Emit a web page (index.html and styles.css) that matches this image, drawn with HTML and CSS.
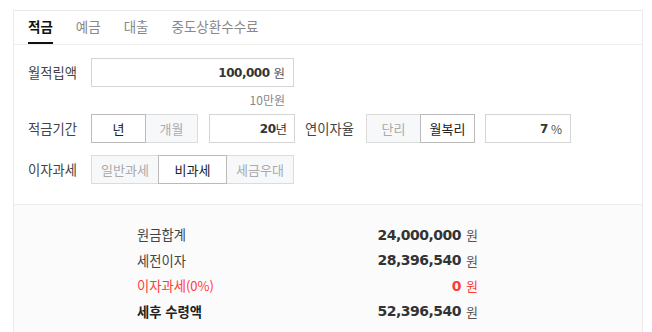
FILE: index.html
```html
<!DOCTYPE html>
<html lang="ko">
<head>
<meta charset="utf-8">
<link rel="stylesheet" href="styles.css">
</head>
<body>
<div class="card">
  <div class="tabs">
    <span class="tab active">적금</span>
    <span class="tab">예금</span>
    <span class="tab">대출</span>
    <span class="tab">중도상환수수료</span>
  </div>
  <div class="form">
    <div class="row">
      <span class="label">월적립액</span>
      <div class="input wide"><span class="num">100,000</span><span class="unit">원</span></div>
    </div>
    <div class="hint">10만원</div>
    <div class="row r2">
      <span class="label">적금기간</span>
      <div class="toggle">
        <span class="opt sel w54">년</span>
        <span class="opt w53">개월</span>
      </div>
      <div class="input mid"><span class="num">20</span><span class="unit tight">년</span></div>
      <span class="label label2">연이자율</span>
      <div class="toggle">
        <span class="opt w54">단리</span>
        <span class="opt sel w54">월복리</span>
      </div>
      <div class="input mid2"><span class="num">7</span><span class="unit pct">%</span></div>
    </div>
    <div class="row r3">
      <span class="label">이자과세</span>
      <div class="toggle">
        <span class="opt w68">일반과세</span>
        <span class="opt sel w69">비과세</span>
        <span class="opt w68">세금우대</span>
      </div>
    </div>
  </div>
  <div class="result">
    <div class="res-row"><span class="rlabel">원금합계</span><span class="rval">24,000,000</span><span class="runit">원</span></div>
    <div class="res-row"><span class="rlabel">세전이자</span><span class="rval">28,396,540</span><span class="runit">원</span></div>
    <div class="res-row red"><span class="rlabel">이자과세<span class="paren">(0%)</span></span><span class="rval">0</span><span class="runit">원</span></div>
    <div class="res-row total"><span class="rlabel">세후 수령액</span><span class="rval">52,396,540</span><span class="runit">원</span></div>
  </div>
</div>
</body>
</html>
```

FILE: styles.css
```css
* { box-sizing: border-box; }
html, body { margin: 0; padding: 0; background: #fff; }
body {
  font-family: "Noto Sans CJK KR", "Noto Sans", sans-serif;
  font-size: 13px;
  color: #333;
}
.card {
  margin: 10px 0 0 13px;
  width: 630px;
  height: 322px;
  border: 1px solid #ebebeb;
  border-bottom: none;
  background: #fff;
  display: flex;
  flex-direction: column;
}
.tabs {
  display: flex;
  gap: 23px;
  padding-left: 14px;
  height: 34px;
  flex: none;
  border-bottom: 1px solid #eee;
}
.tab {
  height: 33px;
  display: flex;
  align-items: center;
  font-size: 13.5px;
  color: #888;
  border-bottom: 2px solid transparent;
  line-height: 1;
}
.tab.active {
  color: #111;
  font-weight: bold;
  border-bottom-color: #111;
}
.form {
  flex: none;
  padding: 13px 0 20px 14px;
}
.row {
  display: flex;
  align-items: center;
  height: 29px;
}
.label {
  width: 63px;
  flex: none;
  color: #444;
  font-size: 13.3px;
}
.label2 { width: 61px; margin-left: 10px; }
.input {
  height: 29px;
  border: 1px solid #d5d5d5;
  background: #fff;
  display: flex;
  align-items: center;
  justify-content: flex-end;
  padding-right: 8px;
}
.wide { width: 203px; }
.mid { width: 86px; margin-left: 11px; padding-right: 7px; }
.mid2 { width: 86px; margin-left: 10px; padding-right: 8px; }
.num {
  font-family: "DejaVu Sans", sans-serif;
  font-weight: bold;
  font-size: 12px;
  letter-spacing: -0.5px;
  color: #333;
}
.unit {
  margin-left: 4px;
  font-size: 12.5px;
  color: #555;
}
.unit.tight { margin-left: 0; color: #333; }
.unit.pct { margin-left: 3px; font-size: 12px; }
.hint {
  text-align: right;
  width: 257px;
  font-size: 12px;
  color: #888;
  height: 27px;
  line-height: 26px;
}
.r3 { margin-top: 12px; }
.toggle { display: flex; }
.opt {
  height: 29px;
  display: flex;
  align-items: center;
  justify-content: center;
  border: 1px solid #dcdcdc;
  background: #f7f8fa;
  color: #aaa;
  margin-left: -1px;
  position: relative;
}
.opt:first-child { margin-left: 0; }
.opt.sel {
  background: #fff;
  border-color: #bbb;
  color: #222;
  z-index: 1;
}
.w54 { width: 55px; }
.w53 { width: 53px; }
.w68 { width: 68px; }
.w69 { width: 69px; }
.result {
  flex: 1;
  background: #fbfbfb;
  border-top: 1px solid #eee;
  padding: 17px 0 0 123px;
}
.res-row {
  display: flex;
  align-items: center;
  height: 25.5px;
  width: 341px;
}
.rlabel {
  flex: 1;
  color: #444;
  font-size: 13.3px;
}
.rval {
  font-family: "DejaVu Sans", sans-serif;
  font-weight: bold;
  font-size: 14px;
  letter-spacing: -0.5px;
  color: #333;
}
.runit {
  margin-left: 5px;
  color: #555;
  font-size: 13px;
}
.red .rlabel, .red .rval, .red .runit { color: #ff3b3b; }
.paren { font-size: 13px; }
.total .rlabel { color: #222; font-weight: bold; }
```
